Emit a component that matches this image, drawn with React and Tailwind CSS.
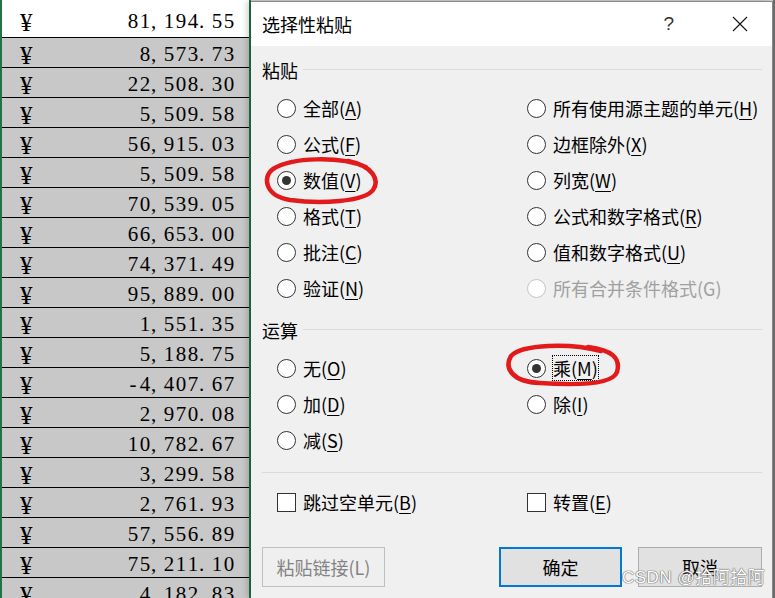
const values = [
  "81,194.55", "8,573.73", "22,508.30", "5,509.58", "56,915.03", "5,509.58",
  "70,539.05", "66,653.00", "74,371.49", "95,889.00", "1,551.35", "5,188.75",
  "-4,407.67", "2,970.08", "10,782.67", "3,299.58", "2,761.93", "57,556.89",
  "75,211.10", "4,182.83",
];

const Amount = ({ text }) => (
  <span className="flex">
    {text.split("").map((c, i) => (
      <span key={i} className={`inline-block w-[12px] ${c === "," || c === "." ? "text-left" : "text-center"}`}>{c}</span>
    ))}
  </span>
);

const Radio = ({ checked, disabled }) => (
  <span className={`w-[19px] h-[19px] rounded-full border bg-white flex items-center justify-center shrink-0 ${disabled ? "border-[#c4c4c4]" : "border-[#333333]"}`}>
    {checked && <span className="w-[9px] h-[9px] rounded-full bg-[#333333]" />}
  </span>
);

const Check = () => (
  <span className="w-[19px] h-[19px] border border-[#333333] bg-white shrink-0" />
);

// label like 全部(A) with the access key underlined
const Label = ({ text, k, disabled, focus }) => (
  <span className={`leading-[24px] ${disabled ? "text-[#a0a0a0]" : "text-black"} ${focus ? "outline-1 outline-dotted outline-black" : ""}`}>
    {text}({disabled ? k : <span className="underline underline-offset-[3px]">{k}</span>})
  </span>
);

const Option = ({ text, k, checked, disabled, focus }) => (
  <div className="flex items-center gap-[7px] h-[36px]">
    <Radio checked={checked} disabled={disabled} />
    <Label text={text} k={k} disabled={disabled} focus={focus} />
  </div>
);

const Section = ({ title }) => (
  <div className="flex items-center gap-[5px] h-[24px]">
    <span className="leading-[24px]">{title}</span>
    <span className="flex-1 h-px bg-[#dadada] mt-[-2px]" />
  </div>
);

export default function App() {
  return (
    <div className="relative w-[775px] h-[598px] overflow-hidden flex bg-[#cfcfcf]">
      {/* spreadsheet column */}
      <div className="w-[251px] shrink-0 border-x-2 border-[#217346] flex flex-col font-['Liberation_Serif',serif] text-[21px] text-black">
        {values.map((v, i) => (
          <div
            key={i}
            className={`flex items-center justify-between shrink-0 pl-[18px] pr-[14px] ${i === 0 ? "h-[37px] pt-[7px] bg-white" : "h-[30px] pt-[5px] border-t border-black bg-[#c8c8c8]"}`}
          >
            <span className="text-[25px] leading-none">¥</span>
            <Amount text={v} />
          </div>
        ))}
      </div>

      {/* dialog */}
      <div className="flex-1 mt-[1px] flex flex-col bg-[#f0f0f0] border-r border-t border-[#8a8a8a] shadow-[-4px_0_6px_rgba(0,0,0,0.18)] font-['Noto_Sans_CJK_SC',sans-serif] text-[18px] text-black">
        <div className="h-[44px] bg-white flex items-center pl-[11px] pr-[24px] shrink-0">
          <span className="flex-1 leading-[24px]">选择性粘贴</span>
          <span className="text-[19px] text-[#333] mr-[58px] font-['Liberation_Sans',sans-serif]">?</span>
          <svg width="16" height="16" viewBox="0 0 16 16" className="mt-[-1px]">
            <path d="M1 1 L15 15 M15 1 L1 15" stroke="#111" strokeWidth="1.1" />
          </svg>
        </div>

        <div className="flex flex-col pl-[11px] pr-[10px]">
          <div className="mt-[12px]"><Section title="粘贴" /></div>
          <div className="grid grid-cols-[250px_1fr] pl-[15px] mt-[8px]">
            <Option text="全部" k="A" />
            <Option text="所有使用源主题的单元" k="H" />
            <Option text="公式" k="F" />
            <Option text="边框除外" k="X" />
            <Option text="数值" k="V" checked />
            <Option text="列宽" k="W" />
            <Option text="格式" k="T" />
            <Option text="公式和数字格式" k="R" />
            <Option text="批注" k="C" />
            <Option text="值和数字格式" k="U" />
            <Option text="验证" k="N" />
            <Option text="所有合并条件格式" k="G" disabled />
          </div>

          <div className="mt-[12px]"><Section title="运算" /></div>
          <div className="grid grid-cols-[250px_1fr] pl-[15px] mt-[8px]">
            <Option text="无" k="O" />
            <Option text="乘" k="M" checked focus />
            <Option text="加" k="D" />
            <Option text="除" k="I" />
            <Option text="减" k="S" />
            <div />
          </div>

          <div className="h-px bg-[#dadada] mt-[14px]" />

          <div className="grid grid-cols-[250px_1fr] pl-[15px] mt-[11px]">
            <div className="flex items-center gap-[7px] h-[36px]">
              <Check />
              <Label text="跳过空单元" k="B" />
            </div>
            <div className="flex items-center gap-[7px] h-[36px]">
              <Check />
              <Label text="转置" k="E" />
            </div>
          </div>

          <div className="flex items-center mt-[27px]">
            <button className="w-[123px] h-[40px] border border-[#bfbfbf] bg-[#efefef] text-[#838383]">粘贴链接(L)</button>
            <div className="flex-1" />
            <button className="w-[123px] h-[40px] border-2 border-[#0078d7] bg-[#e1e1e1]">确定</button>
            <button className="w-[124px] h-[40px] ml-[16px] border border-[#adadad] bg-[#e1e1e1]">取消</button>
          </div>
        </div>
      </div>
      <div className="w-[2px] shrink-0 bg-[#6a6a6a]" />

      {/* red hand-drawn annotations */}
      <svg className="absolute left-0 top-0 pointer-events-none" width="775" height="598">
        <path
          d="M366 167 C340 156 292 157 273 169 C262 177 265 196 290 200 C320 204 364 202 373 190 C380 180 373 166 348 161"
          fill="none" stroke="#e31a1c" strokeWidth="4.5" strokeLinecap="round"
        />
        <path
          d="M601 351 C570 343 522 344 511 356 C504 368 512 382 540 383 C570 385 612 386 617 372 C621 358 612 350 588 347"
          fill="none" stroke="#e31a1c" strokeWidth="4.5" strokeLinecap="round"
        />
      </svg>

      {/* watermark */}
      <span className="absolute left-[622px] top-[567px] text-[17px] leading-[22px] tracking-[0.5px] text-white font-['Liberation_Sans','Noto_Sans_CJK_SC',sans-serif] [text-shadow:0_0_1px_#666,0_0_1px_#666,0_0_1px_#666]">
        CSDN @拾阿拾阿
      </span>
    </div>
  );
}
